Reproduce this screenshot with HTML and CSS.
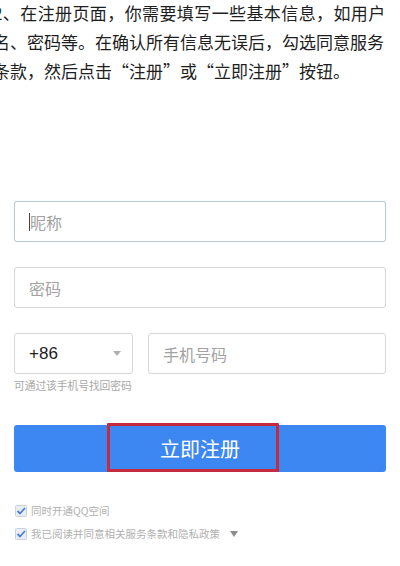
FILE: index.html
```html
<!DOCTYPE html>
<html lang="zh-CN">
<head>
    <meta charset="UTF-8">
    <meta name="viewport" content="width=device-width, initial-scale=1.0">
    <title>注册</title>
    <link rel="stylesheet" href="styles.css">
</head>
<body>
    <p class="intro"><span class="first">2、在注册页面，你需要填写一些基本信息，如用户</span><br>名、密码等。在确认所有信息无误后，勾选同意服务<br>条款，然后点击“注册”或“立即注册”按钮。</p>

    <div class="form">
        <div class="field focused">
            <span class="caret"></span>
            <span class="placeholder">昵称</span>
        </div>
        <div class="field">
            <span class="placeholder">密码</span>
        </div>

        <div class="phone-row">
            <div class="field code">
                <span class="code-value">+86</span>
                <span class="arrow"></span>
            </div>
            <div class="field phone">
                <span class="placeholder">手机号码</span>
            </div>
        </div>
        <div class="hint">可通过该手机号找回密码</div>

        <div class="submit-wrap">
            <button class="submit">立即注册</button>
            <div class="mark"></div>
        </div>

        <div class="checks">
            <div class="check">
                <svg width="12" height="12" viewBox="0 0 12 12"><rect x="0.5" y="0.5" width="11" height="11" rx="1" fill="#e9eef5" stroke="#c9d3df"/><path d="M2.5 6 L5 8.5 L10 3" fill="none" stroke="#4c7fd6" stroke-width="1.8"/></svg>
                <span>同时开通QQ空间</span>
            </div>
            <div class="check">
                <svg width="12" height="12" viewBox="0 0 12 12"><rect x="0.5" y="0.5" width="11" height="11" rx="1" fill="#e9eef5" stroke="#c9d3df"/><path d="M2.5 6 L5 8.5 L10 3" fill="none" stroke="#4c7fd6" stroke-width="1.8"/></svg>
                <span>我已阅读并同意相关服务条款和隐私政策</span>
                <span class="small-arrow"></span>
            </div>
        </div>
    </div>
</body>
</html>
```

FILE: styles.css
```css
body {
    margin: 0;
    background: #fff;
    font-family: "Liberation Sans", "Noto Sans CJK SC", sans-serif;
    overflow: hidden;
}
.intro {
    margin: -2px 0 0 -7px;
    font-size: 17px;
    line-height: 29px;
    color: #1e1e1e;
    white-space: nowrap;
    font-family: "Noto Sans CJK SC", sans-serif;
}
.first {
    letter-spacing: 0.4px;
}
.form {
    padding: 0 14px;
    margin-top: 116px;
}
.field {
    height: 41px;
    box-sizing: border-box;
    border: 1px solid #d6d6d6;
    border-radius: 3px;
    display: flex;
    align-items: center;
    padding-left: 14px;
    margin-bottom: 25px;
    position: relative;
    background: #fff;
}
.field.focused {
    border-color: #b9c9cf;
    box-shadow: 0 0 1px #d8e2e6;
}
.placeholder {
    font-family: "Noto Sans CJK SC", sans-serif;
    font-size: 16px;
    color: #a2a2a2;
}
.caret {
    width: 1px;
    height: 18px;
    background: #444;
}
.phone-row {
    display: flex;
    gap: 15px;
}
.phone-row .field {
    margin-bottom: 0;
}
.code {
    width: 119px;
    justify-content: space-between;
    padding-right: 11px;
}
.code-value {
    font-size: 17px;
    color: #222;
}
.arrow {
    width: 0;
    height: 0;
    border-left: 4px solid transparent;
    border-right: 4px solid transparent;
    border-top: 5px solid #b0b0b0;
}
.phone {
    flex: 1;
}
.hint {
    font-family: "Noto Sans CJK SC", sans-serif;
    font-size: 10.8px;
    color: #a8a8a8;
    margin-top: 4px;
    line-height: 14px;
    letter-spacing: -0.1px;
}
.submit-wrap {
    position: relative;
    margin-top: 33px;
}
.submit {
    display: block;
    width: 100%;
    height: 47px;
    border: none;
    border-radius: 3px;
    background: #3d87f2;
    color: #fff;
    font-family: "Noto Sans CJK SC", sans-serif;
    font-size: 20px;
    padding: 0;
}
.mark {
    position: absolute;
    left: 93px;
    top: -2px;
    width: 172px;
    height: 49px;
    box-sizing: border-box;
    border: 3px solid #c52a3f;
    border-radius: 1px;
}
.checks {
    margin-top: 27px;
    padding-left: 1px;
}
.check {
    display: flex;
    align-items: center;
    gap: 4px;
    height: 23px;
    font-family: "Noto Sans CJK SC", sans-serif;
    font-size: 10.5px;
    color: #b0b0b0;
}
.small-arrow {
    width: 0;
    height: 0;
    border-left: 4px solid transparent;
    border-right: 4px solid transparent;
    border-top: 6px solid #8d8d8d;
    margin-left: 6px;
}
```
